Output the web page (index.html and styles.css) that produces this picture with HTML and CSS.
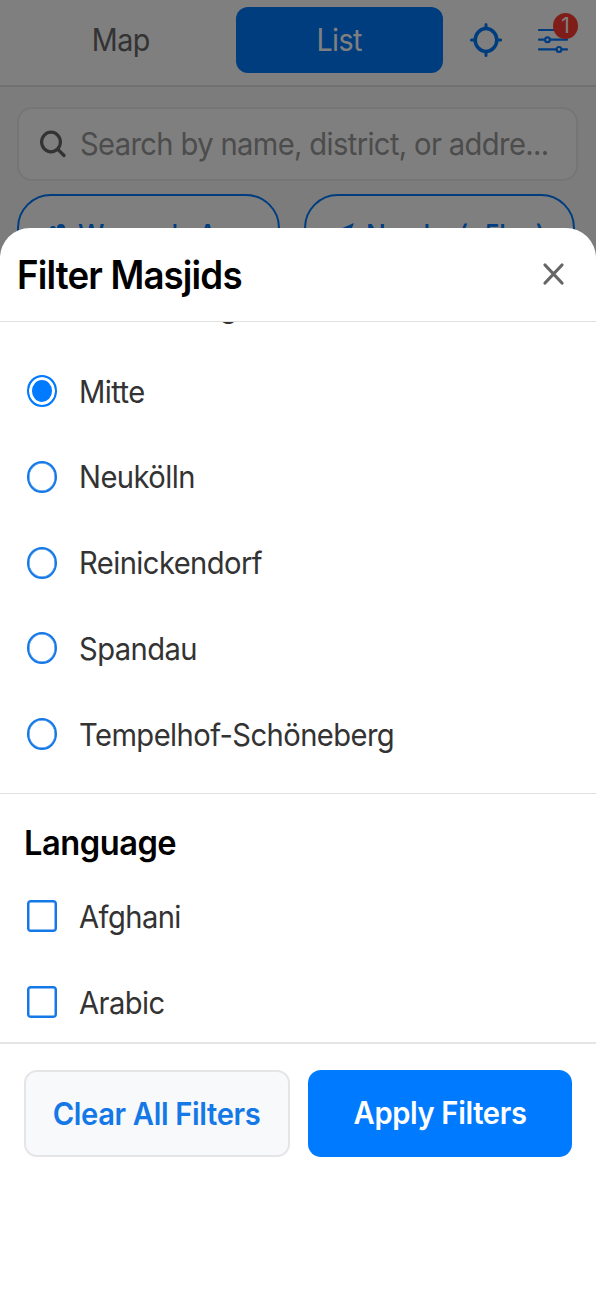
FILE: index.html
```
<!DOCTYPE html>
<html lang="en">
<head>
	<meta charset="utf-8">
	<title>Masjids</title>
	<link rel="stylesheet" href="styles.css">
</head>
<body>
	<div class="page">
		<div class="topbar">
			<button class="tab"><span class="txt">Map</span></button>
			<button class="tab active"><span class="txt">List</span></button>
			<button class="icon-btn locate">
				<svg width="34" height="36" viewBox="0 0 34 36" fill="none" stroke="#007aff" stroke-linecap="round">
					<ellipse cx="17" cy="18" rx="10.8" ry="11.4" stroke-width="3.5"/>
					<path d="M17 2.4v4M17 29.6v4M2.4 18h3.4M28.2 18h3.4" stroke-width="3"/>
				</svg>
			</button>
			<button class="icon-btn filters">
				<svg width="32" height="28" viewBox="0 0 32 28" fill="none" stroke="#007aff" stroke-width="2.2" stroke-linecap="round">
					<path d="M2 4h28M2 13.7h6M13 13.7h17M2 23.4h17.5M25 23.4h5"/>
					<circle cx="10.5" cy="13.7" r="2.4"/>
					<circle cx="22" cy="23.4" r="2.4"/>
				</svg>
				<span class="badge">1</span>
			</button>
		</div>
		<div class="search">
			<svg width="28" height="28" viewBox="0 0 28 28" fill="none" stroke="#666" stroke-width="3.2" stroke-linecap="round">
				<ellipse cx="12" cy="12" rx="9.4" ry="9.8"/>
				<path d="M19 19.5l6 6"/>
			</svg>
			<span class="txt">Search by name, district, or addre...</span>
		</div>
		<div class="chips">
			<div class="chip women">
				<svg width="20" height="24" viewBox="0 0 20 24" fill="#007aff">
					<circle cx="5" cy="6" r="3"/><circle cx="13" cy="5" r="4"/>
					<path d="M0 20c0-12 10-12 10 0zM8 20c0-12 12-12 12 0z"/>
				</svg>
				<span class="txt">Women's Area</span>
			</div>
			<div class="chip nearby">
				<svg width="24" height="24" viewBox="0 0 24 24" fill="#007aff"><path d="M22 0L1 9l9 3 3 10z"/></svg>
				<span class="txt">Nearby (&lt;5km)</span>
			</div>
		</div>
	</div>

	<div class="overlay">
		<div class="sheet">
			<div class="sheet-head">
				<h2 class="txt">Filter Masjids</h2>
				<button class="close">
					<svg width="24" height="24" viewBox="0 0 24 24" stroke="#666" stroke-width="3.2" stroke-linecap="round"><path d="M4 3l17 18M21 3l-17 18"/></svg>
				</button>
			</div>
			<div class="sheet-body">
				<div class="group districts">
					<label class="option"><span class="radio"></span><span class="txt">Lichtenberg</span></label>
					<label class="option"><span class="radio checked"></span><span class="txt">Mitte</span></label>
					<label class="option"><span class="radio"></span><span class="txt">Neukölln</span></label>
					<label class="option"><span class="radio"></span><span class="txt">Reinickendorf</span></label>
					<label class="option"><span class="radio"></span><span class="txt">Spandau</span></label>
					<label class="option"><span class="radio"></span><span class="txt">Tempelhof-Schöneberg</span></label>
				</div>
				<div class="group languages">
					<h3 class="txt">Language</h3>
					<label class="option"><span class="check"></span><span class="txt">Afghani</span></label>
					<label class="option"><span class="check"></span><span class="txt">Arabic</span></label>
				</div>
			</div>
			<div class="sheet-foot">
				<button class="btn clear"><span class="txt">Clear All Filters</span></button>
				<button class="btn apply"><span class="txt">Apply Filters</span></button>
			</div>
		</div>
	</div>
</body>
</html>
```

FILE: styles.css
```
* {box-sizing:border-box;}
html, body {height:100%;}
body {
	margin: 0;
	overflow: hidden;
	background: #fff;
	color: #333;
	font-family: Inter, "Liberation Sans", sans-serif;
	font-size: 31px;
}
button {
	padding: 0;
	border: 0;
	background: none;
	font: inherit;
	color: inherit;
}
svg {display:block; flex:none;}
h2, h3 {margin:0; color:#000; font-weight:600;}

/* narrow lettering */
.txt {
	display: inline-block;
	white-space: nowrap;
	letter-spacing: -.6px;
	transform: scaleX(.94);
	transform-origin: left center;
}
.tab .txt, .btn .txt {transform-origin:center;}
.btn .txt {letter-spacing:-.37px;}

/* page behind the sheet */
.page {height:1290px; background:#f8f8f8;}
.topbar {
	display: flex;
	align-items: flex-start;
	height: 87px;
	padding: 6.5px 0 0 6px;
	border-bottom: 2px solid #e0e0e0;
	background: #fff;
}
.tab {
	width: 230px;
	height: 66px;
	padding-bottom: 1px;
	border-radius: 12px;
	font-size: 30.5px;
	color: #666;
}
.tab.active {width:207px; background:#007aff; color:#fff;}
.icon-btn {position:relative; height:66px;}
.locate {margin-left:26px;}
.filters {margin-left:34px;}
.badge {
	position: absolute;
	top: 6px;
	right: -9px;
	width: 25px;
	height: 26px;
	border-radius: 50%;
	background: #ff3b30;
	color: #fff;
	font-size: 21px;
	line-height: 26px;
	text-align: center;
}
.search {
	display: flex;
	align-items: center;
	height: 74px;
	margin: 20px 18px 13px 17px;
	padding: 0 0 1px 20px;
	border: 2px solid #ebebf0;
	border-radius: 15px;
	background: #fff;
	color: #999;
}
.search .txt {margin-left:13px; letter-spacing:-.67px;}
.chips {display:flex; gap:24px; padding-left:17px;}
.chip {
	display: flex;
	align-items: center;
	gap: 10px;
	width: 263px;
	height: 82px;
	padding-left: 29px;
	border: 2px solid #007aff;
	border-radius: 34px;
	background: #fff;
	color: #007aff;
	font-size: 28px;
	font-weight: 500;
}
.nearby {width:271px; padding-left:26px;}
.nearby .txt {letter-spacing:-1px;}

/* bottom sheet */
.overlay {
	position: fixed;
	top: 0;
	right: 0;
	bottom: 0;
	left: 0;
	display: flex;
	align-items: flex-end;
	background: rgba(0,0,0,.5);
}
.sheet {
	display: flex;
	flex-direction: column;
	width: 100%;
	height: 1062px;
	border-radius: 30px 30px 0 0;
	background: #fff;
	overflow: hidden;
}
.sheet-head {
	display: flex;
	align-items: center;
	justify-content: space-between;
	flex: none;
	height: 94px;
	padding: 0 31px 1px 17px;
	border-bottom: 1.5px solid #e0e0e0;
}
.sheet-head h2 {font-size:39px; letter-spacing:-.9px;}
.sheet-body {
	height: 720px;
	overflow: hidden;
}
.option {
	display: flex;
	align-items: center;
	height: 85.75px;
	padding-left: 26.5px;
}
.option .txt {margin-left:22px;}
.radio, .check {
	flex: none;
	width: 30.5px;
	height: 32px;
	border: 2px solid #1478e6;
	box-shadow: inset 0 0 0 .5px #1478e6;
}
.radio {border-radius:50%;}
.checked {
	border-color: #007aff;
	background: #007aff;
	box-shadow: inset 0 0 0 3px #fff;
}
.check {border-radius:4px;}
/* list is scrolled down to the selected district */
.districts {margin-top:-59.5px; padding-bottom:15.5px; border-bottom:1.5px solid #e0e0e0;}
.languages {padding-top:27px;}
.languages h3 {
	display: block;
	margin: 0 0 9px 24px;
	font-size: 34px;
	line-height: 44px;
	letter-spacing: -.5px;
	transform: scaleX(.96);
}
.sheet-foot {
	display: flex;
	gap: 18px;
	height: 248px;
	padding: 26px 24px 0;
	border-top: 2px solid #e5e5e5;
}
.btn {
	height: 87px;
	border-radius: 13px;
	font-weight: 600;
}
.clear {width:266px; border:2px solid #e5e5e8; background:#f8f9fb; color:#1478e6;}
.apply {width:264px; padding-bottom:3px; background:#007aff; color:#fff;}
```
